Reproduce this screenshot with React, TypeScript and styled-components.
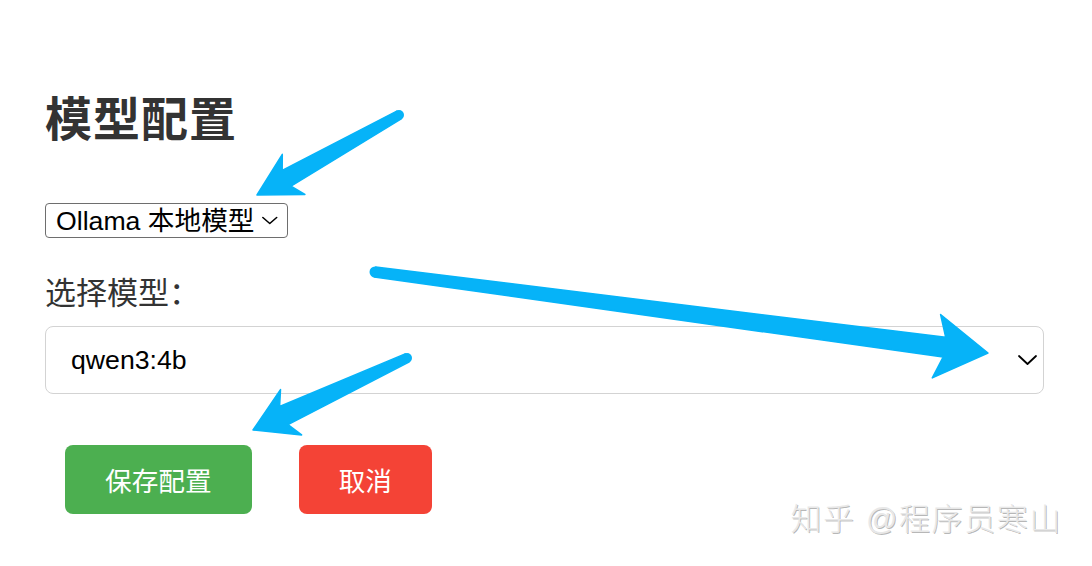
import React from "react";
import styled, { createGlobalStyle } from "styled-components";

const GlobalStyle = createGlobalStyle`
  html, body {
    margin: 0;
    padding: 0;
    background: #ffffff;
  }
  body {
    font-family: "Liberation Sans", "Noto Sans CJK SC", sans-serif;
  }
`;

const Page = styled.div`
  position: relative;
  width: 1092px;
  height: 566px;
  overflow: hidden;
  background: #fff;
  box-sizing: border-box;
  padding: 92px 48px 0 45px;
  display: flex;
  flex-direction: column;
  align-items: flex-start;
`;

const Title = styled.h2`
  margin: 0;
  font-size: 47px;
  line-height: 56px;
  font-weight: 700;
  color: #333;
  letter-spacing: 1px;
`;

const SelectBox = styled.div<{ $size: "small" | "large" }>`
  box-sizing: border-box;
  display: flex;
  align-items: center;
  justify-content: space-between;
  font-size: 26.67px;
  color: #000;
  background: #fff;
  ${(p) =>
    p.$size === "small"
      ? `
    margin-top: 55px;
    height: 35px;
    width: 243px;
    padding: 0 9px 0 10px;
    border: 1px solid #6e6e6e;
    border-radius: 4px;
    gap: 8px;
  `
      : `
    margin-top: 12px;
    height: 68px;
    width: 999px;
    padding: 0 6px 0 25px;
    border: 1px solid #d3d3d3;
    border-radius: 8px;
  `}
`;

const SelectText = styled.span`
  white-space: nowrap;
  line-height: 32px;
`;

const Label = styled.div`
  margin-top: 36px;
  font-size: 31px;
  line-height: 40px;
  color: #333;
`;

const ButtonRow = styled.div`
  margin-top: 51px;
  display: flex;
  gap: 47px;
  padding-left: 20px;
`;

const Button = styled.button<{ $variant: "save" | "cancel" }>`
  height: 69px;
  padding: 0 40px;
  border: none;
  border-radius: 8px;
  font-family: "Liberation Sans", "Noto Sans CJK SC", sans-serif;
  font-size: 26.67px;
  color: #fff;
  background: ${(p) => (p.$variant === "save" ? "#4caf50" : "#f44336")};
  cursor: pointer;
`;

const Watermark = styled.div`
  position: absolute;
  right: 30px;
  top: 500px;
  font-size: 31px;
  line-height: 40px;
  letter-spacing: 1.6px;
  font-weight: 300;
  color: #e8e8e8;
  text-shadow: 1px 1px 0 rgba(0, 0, 0, 0.28);
  white-space: pre;
`;

const Overlay = styled.svg`
  position: absolute;
  left: 0;
  top: 0;
  pointer-events: none;
`;

const Chevron = ({ w, h }: { w: number; h: number }) => (
  <svg width={w} height={h} viewBox={`0 0 ${w} ${h}`} fill="none">
    <polyline
      points={`1,1 ${w / 2},${h - 1} ${w - 1},1`}
      stroke="#000"
      strokeWidth={1.8}
      strokeLinecap="round"
      strokeLinejoin="round"
    />
  </svg>
);

type P = [number, number];

function arrowPoints(
  tail: P,
  tip: P,
  tailW: number,
  neckW: number,
  headLen: number,
  neckLen: number,
  headW: number
) {
  const dx = tip[0] - tail[0];
  const dy = tip[1] - tail[1];
  const L = Math.hypot(dx, dy);
  const ux = dx / L;
  const uy = dy / L;
  const nx = -uy;
  const ny = ux;
  const at = (d: number, off: number) =>
    `${(tail[0] + ux * d + nx * off).toFixed(1)},${(tail[1] + uy * d + ny * off).toFixed(1)}`;
  return [
    at(0, tailW / 2),
    at(L - neckLen, neckW / 2),
    at(L - headLen, headW / 2),
    at(L, 0),
    at(L - headLen, -headW / 2),
    at(L - neckLen, -neckW / 2),
    at(0, -tailW / 2),
  ].join(" ");
}

const ARROW = "#06b3f8";

const arrows: {
  tail: P;
  tip: P;
  tailW: number;
  neckW: number;
  headLen: number;
  neckLen: number;
  headW: number;
}[] = [
  { tail: [399, 115], tip: [257, 195], tailW: 9, neckW: 18, headLen: 42, neckLen: 34, headW: 46 },
  { tail: [375, 272], tip: [988, 353], tailW: 10, neckW: 20, headLen: 52, neckLen: 44, headW: 64 },
  { tail: [407, 358], tip: [253, 430], tailW: 9, neckW: 20, headLen: 42, neckLen: 34, headW: 50 },
];

export default function App() {
  return (
    <>
      <GlobalStyle />
      <Page>
        <Title>模型配置</Title>
        <SelectBox $size="small">
          <SelectText>Ollama 本地模型</SelectText>
          <Chevron w={18} h={9} />
        </SelectBox>
        <Label>选择模型：</Label>
        <SelectBox $size="large">
          <SelectText>qwen3:4b</SelectText>
          <Chevron w={19} h={10} />
        </SelectBox>
        <ButtonRow>
          <Button $variant="save">保存配置</Button>
          <Button $variant="cancel">取消</Button>
        </ButtonRow>
        <Watermark>知乎 @程序员寒山</Watermark>
        <Overlay width={1092} height={566} viewBox="0 0 1092 566">
          {arrows.map((a, i) => (
            <g key={i} fill={ARROW}>
              <polygon
                points={arrowPoints(a.tail, a.tip, a.tailW, a.neckW, a.headLen, a.neckLen, a.headW)}
                stroke={ARROW}
                strokeWidth={1.5}
                strokeLinejoin="round"
              />
              <circle cx={a.tail[0]} cy={a.tail[1]} r={a.tailW / 2 + 0.5} />
            </g>
          ))}
        </Overlay>
      </Page>
    </>
  );
}
